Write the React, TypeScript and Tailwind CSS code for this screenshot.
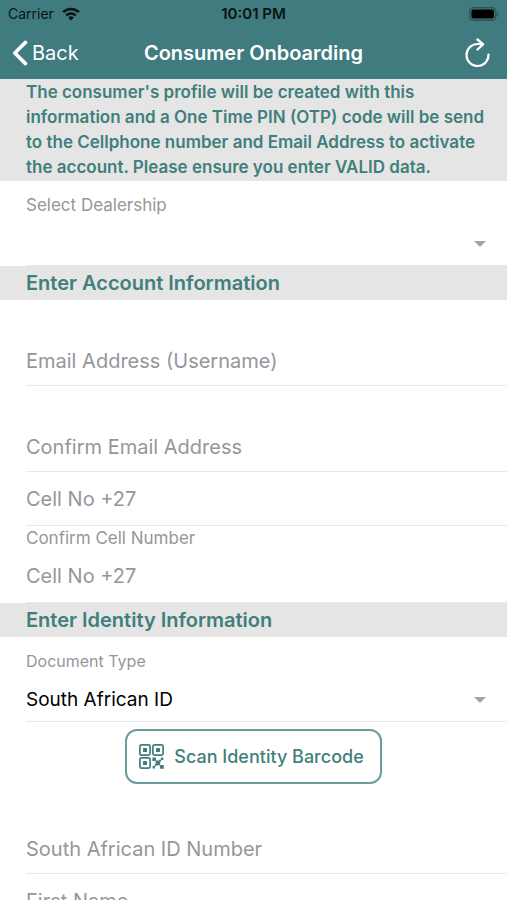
import { useState } from 'react';

const dealerships = [''];
const documentTypes = ['South African ID', 'Passport'];

type SelectRowProps = {
  id: string;
  label: string;
  options: string[];
  labelClass?: string;
};

function SelectRow({ id, label, options, labelClass = 'text-base' }: SelectRowProps) {
  const [value, setValue] = useState(options[0]);

  return (
    <div className="pl-[26px]">
      <div className="border-b border-[#e9e9eb] pt-3">
        <label htmlFor={id} className={`${labelClass} block h-6 leading-6 text-[#96969a]`}>
          {label}
        </label>
        <div className="flex h-12 items-center pt-[6px]">
          <select
            id={id}
            value={value}
            onChange={e => setValue(e.target.value)}
            className="h-full min-w-0 flex-1 appearance-none bg-transparent text-[19px] text-black outline-none"
          >
            {options.map(option => (
              <option key={option}>{option}</option>
            ))}
          </select>
          <svg
            viewBox="0 0 12 6"
            className="pointer-events-none mr-[21px] h-[6px] w-3 fill-[#a3a3a3]"
          >
            <path d="M0 0h12L6 6z" />
          </svg>
        </div>
      </div>
    </div>
  );
}

type InputRowProps = {
  label: string;
  type?: string;
  floating?: boolean;
};

function InputRow({ label, type = 'text', floating }: InputRowProps) {
  return (
    <div className="pl-[26px]">
      <div className={`${floating ? 'pt-9' : 'py-[2px]'} border-b border-[#e9e9eb]`}>
        <input
          type={type}
          aria-label={label}
          placeholder={label}
          className="block h-[49px] w-full bg-transparent text-xl text-black outline-none placeholder:text-[#96969a]"
        />
      </div>
    </div>
  );
}

function SectionTitle({ children }: React.PropsWithChildren) {
  return (
    <h2 className="bg-[#e5e5e5] pl-[26px] text-xl leading-[34px] font-semibold text-[#3f7f7c]">
      {children}
    </h2>
  );
}

function StatusBar() {
  return (
    <div className="grid h-[27px] grid-cols-[1fr_auto_1fr] items-center px-2 text-sm text-[#0a1414]">
      <div className="flex items-center gap-2">
        Carrier
        <svg viewBox="0 0 18 14" className="h-[14px] w-[18px] fill-none stroke-current">
          <path d="M1.2 5.2a11 11 0 0 1 15.6 0" strokeWidth="2.6" />
          <path d="M4.2 8.5a6.8 6.8 0 0 1 9.6 0" strokeWidth="2.4" />
          <path d="M9 13.5 6.2 10.7a4 4 0 0 1 5.6 0z" className="fill-current stroke-none" />
        </svg>
      </div>
      <div className="text-[15px] font-semibold">10:01 PM</div>
      <svg viewBox="0 0 30 14" className="h-[14px] w-[30px] justify-self-end">
        <rect x="0.7" y="0.7" width="26" height="12.6" rx="3.6" fill="none" stroke="#2b5457" strokeWidth="1.4" />
        <rect x="2.4" y="2.4" width="22.6" height="9.2" rx="2" fill="#000" />
        <path d="M28 4.8c1.8.7 1.8 3.7 0 4.4z" fill="#2b5457" />
      </svg>
    </div>
  );
}

function QrIcon() {
  return (
    <svg viewBox="0 0 25 25" className="h-[25px] w-[25px]">
      <g fill="none" stroke="currentColor" strokeWidth="1.7">
        <rect x="0.9" y="0.9" width="10.2" height="10.2" rx="1.5" />
        <rect x="13.9" y="0.9" width="10.2" height="10.2" rx="1.5" />
        <rect x="0.9" y="13.9" width="10.2" height="10.2" rx="1.5" />
      </g>
      <g fill="currentColor">
        <rect x="4" y="4" width="4" height="4" rx="0.5" />
        <rect x="17" y="4" width="4" height="4" rx="0.5" />
        <rect x="4" y="17" width="4" height="4" rx="0.5" />
        <rect x="13.4" y="13.4" width="3.6" height="3.6" rx="0.5" />
        <rect x="16.6" y="16.6" width="4.6" height="4.6" rx="0.5" />
        <rect x="20.9" y="20.9" width="3.9" height="3.9" rx="0.5" />
        <rect x="22" y="13.6" width="2.4" height="2.4" rx="0.5" />
        <rect x="20.2" y="15.6" width="2" height="2" rx="0.4" />
        <rect x="13.6" y="22" width="2.4" height="2.4" rx="0.5" />
        <rect x="15.6" y="20.2" width="2" height="2" rx="0.4" />
      </g>
    </svg>
  );
}

function App() {
  return (
    <div className="flex h-screen flex-col overflow-hidden bg-white font-['Inter','Noto_Sans',sans-serif]">
      <header className="bg-[#3f7b7f] text-white">
        <StatusBar />
        <div className="grid h-[52px] grid-cols-[1fr_auto_1fr] items-center px-3">
          <button type="button" className="flex items-center gap-1 justify-self-start text-xl">
            <svg viewBox="0 0 16 26" className="h-[26px] w-4 fill-none stroke-current">
              <path d="M13.5 2.4 2.8 13l10.7 10.6" strokeWidth="3.6" strokeLinecap="round" strokeLinejoin="round" />
            </svg>
            Back
          </button>
          <h1 className="text-xl font-semibold">Consumer Onboarding</h1>
          <button type="button" aria-label="Refresh" className="justify-self-end pr-1">
            <svg viewBox="0 0 26 30" className="h-[30px] w-[26px] fill-none stroke-current">
              <path d="M23.5 16.5A11 11 0 1 1 12.5 6H18" strokeWidth="2.2" strokeLinecap="round" />
              <path d="m12.5 1.5 5.5 4.8-5.5 5.2" strokeWidth="2.4" strokeLinecap="round" strokeLinejoin="round" />
            </svg>
          </button>
        </div>
      </header>
      <main className="min-h-0 flex-1 overflow-y-auto [scrollbar-width:none]">
        <p className="bg-[#e5e5e5] py-px pr-5 pl-[26px] text-[17px] leading-[25px] font-semibold text-[#3f7f7c]">
          The consumer's profile will be created with this information and a One
          Time PIN (OTP) code will be send to the Cellphone number and Email
          Address to activate the account. Please ensure you enter VALID data.
        </p>
        <form>
          <SelectRow
            id="dealership"
            label="Select Dealership"
            labelClass="text-[17px]"
            options={dealerships}
          />
          <SectionTitle>Enter Account Information</SectionTitle>
          <InputRow label="Email Address (Username)" type="email" floating />
          <InputRow label="Confirm Email Address" type="email" floating />
          <InputRow label="Cell No +27" type="tel" />
          <div className="pl-[26px]">
            <div className="border-b border-[#e9e9eb]">
              <label htmlFor="confirm-cell" className="block text-[17px] leading-6 text-[#96969a]">
                Confirm Cell Number
              </label>
              <input
                id="confirm-cell"
                type="tel"
                placeholder="Cell No +27"
                className="block h-[52px] w-full bg-transparent text-xl text-black outline-none placeholder:text-[#96969a]"
              />
            </div>
          </div>
          <SectionTitle>Enter Identity Information</SectionTitle>
          <SelectRow id="document-type" label="Document Type" options={documentTypes} />
          <div className="flex justify-center pt-[7px] pb-1">
            <button
              type="button"
              className="flex h-[55px] items-center gap-[10px] rounded-xl border-2 border-[#6a9d9b] pr-4 pl-3 text-lg font-medium text-[#3f7f7c]"
            >
              <QrIcon />
              Scan Identity Barcode
            </button>
          </div>
          <InputRow label="South African ID Number" floating />
          <InputRow label="First Name" />
        </form>
      </main>
    </div>
  );
}

export default App;
